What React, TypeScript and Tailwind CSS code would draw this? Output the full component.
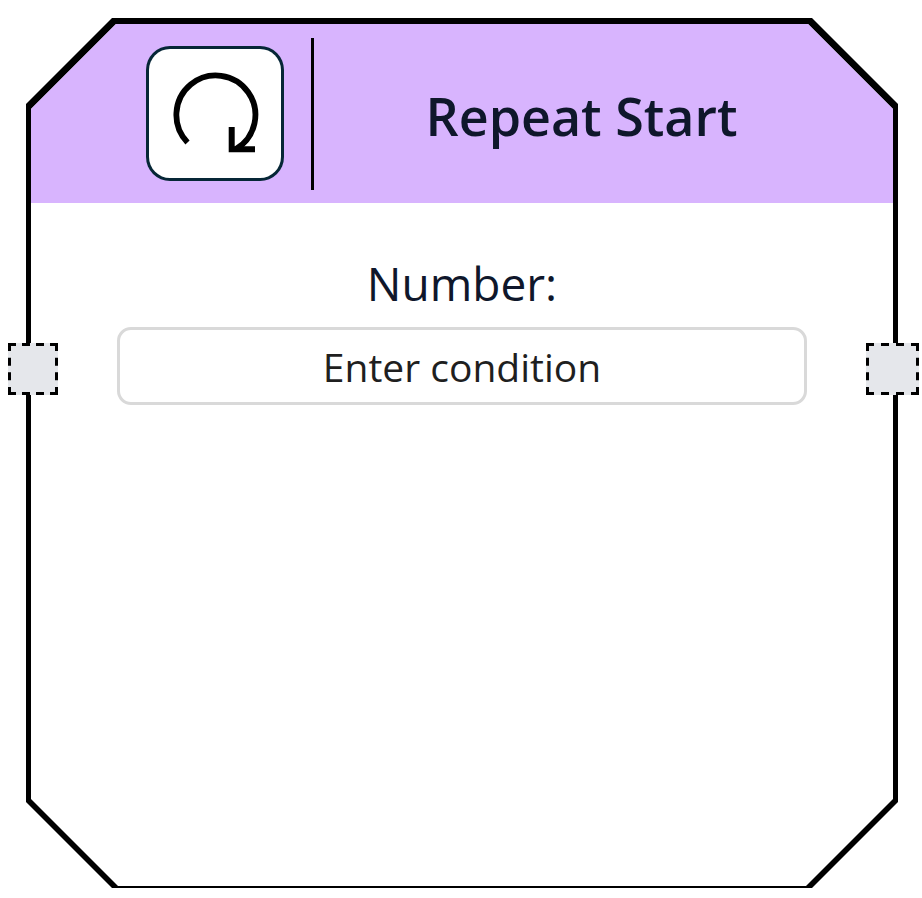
import React, { useState } from "react";

function RepeatIcon() {
  return (
    <svg viewBox="0 0 132 129" className="h-full w-full" fill="none" stroke="#000" strokeWidth="5.8" aria-hidden="true">
      <path d="M38.5 93.5 A39.5 39.5 0 1 1 87 100" />
      <path d="M82.7 78 V100.2 H106" strokeWidth="6" />
    </svg>
  );
}

type HandleProps = { label: string; width: number; className: string };

function Handle({ label, width, className }: HandleProps) {
  const height = 52;
  const dashX = `8 ${(width - 32) / 3}`;
  const dashY = `8 ${(height - 32) / 3}`;
  return (
    <button type="button" aria-label={label} className={`absolute top-[325px] h-[52px] bg-[#e5e7eb] ${className}`}>
      <svg viewBox={`0 0 ${width} ${height}`} className="block h-full w-full" stroke="#000" strokeWidth="3" aria-hidden="true">
        <path d={`M0 1.5 H${width}`} strokeDasharray={dashX} />
        <path d={`M0 ${height - 1.5} H${width}`} strokeDasharray={dashX} />
        <path d={`M1.5 0 V${height}`} strokeDasharray={dashY} />
        <path d={`M${width - 1.5} 0 V${height}`} strokeDasharray={dashY} />
      </svg>
    </button>
  );
}

export default function App() {
  const [condition, setCondition] = useState("");
  return (
    <main className="bg-white pt-[18px] pr-6 pb-[10px] pl-[26px] font-['Open_Sans','Noto_Sans',sans-serif] text-slate-900">
      <section className="relative">
        <div className="bg-black px-[5px] pt-[6px] pb-[2px] [clip-path:polygon(86px_0,calc(100%-86px)_0,100%_86px,100%_calc(100%-86px),calc(100%-86px)_100%,86px_100%,0_calc(100%-86px),0_86px)]">
          <div className="bg-white [clip-path:polygon(85px_0,calc(100%-85px)_0,100%_85px,100%_calc(100%-87px),calc(100%-87px)_100%,87px_100%,0_calc(100%-87px),0_85px)]">
            <header className="flex h-[179px] items-center bg-[#d8b4fe] pr-11 pl-[115px]">
              <div className="h-[135px] w-[138px] shrink-0 rounded-3xl bg-[#062636] p-[3px]">
                <div className="h-full w-full rounded-[21px] bg-white">
                  <RepeatIcon />
                </div>
              </div>
              <div className="ml-[27px] h-[152px] w-[3px] shrink-0 bg-black" />
              <h1 className="flex-1 pt-1 text-center text-[52px] leading-[72px] font-semibold whitespace-nowrap">Repeat Start</h1>
            </header>
            <div className="flex min-h-[683px] flex-col items-center px-[86px] pt-12">
              <label htmlFor="condition" className="text-[46px] leading-[64px]">
                Number:
              </label>
              <input
                id="condition"
                type="text"
                value={condition}
                onChange={(e) => setCondition(e.target.value)}
                placeholder="Enter condition"
                className="mt-3 h-[78px] w-full rounded-[14px] border-[3px] border-[#d9d9d9] bg-white text-center text-[39px] text-[#1f1f1f] placeholder:text-[#1f1f1f]"
              />
            </div>
          </div>
        </div>
        <Handle label="Input connection" width={50} className="-left-[18px] w-[50px]" />
        <Handle label="Output connection" width={53} className="-right-[21px] w-[53px]" />
      </section>
    </main>
  );
}
